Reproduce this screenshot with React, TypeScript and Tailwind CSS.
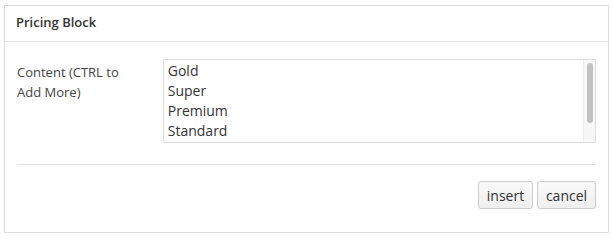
import React from "react";

const items = ["Gold", "Super", "Premium", "Standard"];

const App: React.FC = () => {
  return (
    <div className="w-[613px] h-[240px] bg-white pl-[4px] pt-[5px] text-[#333]" style={{ fontFamily: '"Open Sans", sans-serif' }}>
      <div className="w-[605px] h-[228px] border border-[#dddddd] flex flex-col">
        <div className="h-[36px] border-b border-[#e5e5e5] flex items-center pl-[11px] text-[13px] font-semibold pb-[1px]">
          Pricing Block
        </div>

        <div className="flex px-[12px] pt-[17px]">
          <label className="w-[146px] text-[13px] leading-[20px] pt-[3px] text-[#444]">
            Content (CTRL to
            <br />
            Add More)
          </label>
          <div className="w-[434px] h-[84px] border border-[#dddddd] flex">
            <div className="flex-1 pl-[4px] pt-[1px] text-[14px] leading-[20px]">
              {items.map((item) => (
                <div key={item}>{item}</div>
              ))}
            </div>
            <div className="w-[12px] bg-[#f7f7f7] border-l border-[#ececec] pt-[3px] flex justify-center">
              <div className="w-[6px] h-[60px] rounded-full bg-[#c1c1c1]" />
            </div>
          </div>
        </div>

        <div className="mx-[12px] mt-[21px] border-t border-[#e2e2e2]" />

        <div className="flex justify-end gap-[4px] px-[12px] pt-[16px]">
          <button className="h-[28px] w-[55px] rounded-[3px] border border-[#cccccc] bg-gradient-to-b from-[#fafafa] to-[#efefef] text-[14px] text-[#333]">
            insert
          </button>
          <button className="h-[28px] w-[59px] rounded-[3px] border border-[#cccccc] bg-gradient-to-b from-[#fafafa] to-[#efefef] text-[14px] text-[#333]">
            cancel
          </button>
        </div>
      </div>
    </div>
  );
};

export default App;
